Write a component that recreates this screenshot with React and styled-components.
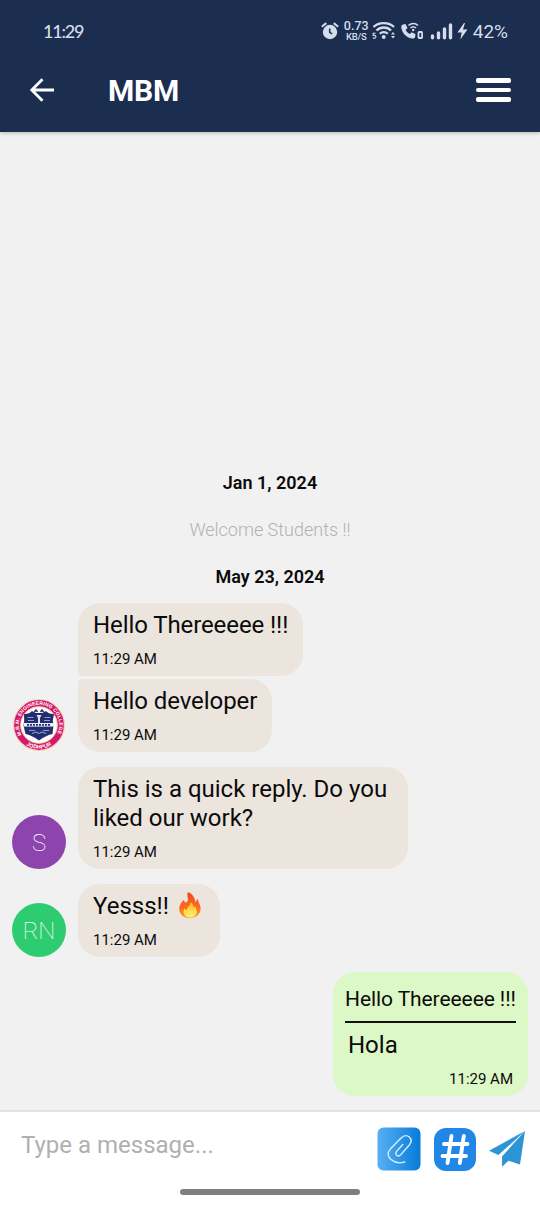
import React from "react";
import styled, { createGlobalStyle } from "styled-components";

const GlobalStyle = createGlobalStyle`
  * { box-sizing: border-box; }
  body { margin: 0; background: #f1f1f1; }
`;

const Screen = styled.div`
  width: 540px;
  height: 1206px;
  display: flex;
  flex-direction: column;
  background: #f1f1f1;
  color: #0b0b0b;
  font-family: Roboto, "Liberation Sans", sans-serif;
  overflow: hidden;
`;

const Top = styled.header`
  flex: none;
  height: 132px;
  background: #1b2e4f;
  box-shadow: 0 1px 4px rgba(0, 0, 0, 0.25);
`;

const StatusBar = styled.div`
  height: 62px;
  padding: 0 32px 0 43px;
  display: flex;
  align-items: center;
  justify-content: space-between;
  color: #d5dcec;
`;

const Clock = styled.span`
  font-family: Lato, sans-serif;
  font-size: 18px;
  font-weight: 500;
  letter-spacing: -1.2px;
`;

const StatusIcons = styled.div`
  display: flex;
  align-items: center;
`;

const Rate = styled.div`
  display: grid;
  grid-template-rows: 11px 9px;
  width: 25px;
  margin-left: 5px;
  font-family: Roboto, sans-serif;
  font-weight: 500;
  text-align: center;
  white-space: nowrap;
`;

const RateValue = styled.div`
  font-size: 12.5px;
  line-height: 10px;
`;

const RateUnit = styled.div`
  font-size: 9.5px;
  line-height: 10px;
  letter-spacing: -0.3px;
`;

const Radios = styled.svg`
  width: 98px;
  height: 24px;
  margin-left: 2px;
`;

const Battery = styled.span`
  margin-left: 4px;
  font-family: Roboto, sans-serif;
  font-size: 19px;
  letter-spacing: 0;
`;

const TitleBar = styled.div`
  height: 56px;
  padding: 0 29px 0 28px;
  display: flex;
  align-items: center;
`;

const Title = styled.h1`
  flex: 1;
  margin: 2px 0 0 52px;
  color: #fff;
  font-size: 30px;
  font-weight: 700;
  line-height: 36px;
  letter-spacing: -0.2px;
`;

const MenuLines = styled.div`
  display: grid;
  gap: 5px;
  width: 35px;
`;

const MenuLine = styled.i`
  height: 4.4px;
  border-radius: 2px;
  background: #fff;
`;

const Chat = styled.main`
  flex: 1;
  display: flex;
  flex-direction: column;
  justify-content: flex-end;
  padding: 0 12px 14px;
`;

const DateLabel = styled.div`
  height: 22px;
  margin-bottom: ${(p) => p.$gap}px;
  font-size: 18px;
  font-weight: 600;
  line-height: 22px;
  text-align: center;
`;

const SystemNote = styled.div`
  height: 22px;
  margin-bottom: 25px;
  color: #b2b2b2;
  font-size: 18px;
  font-weight: 300;
  line-height: 22px;
  text-align: center;
`;

const Row = styled.div`
  display: flex;
  align-items: flex-end;
  justify-content: ${(p) => (p.$own ? "flex-end" : "flex-start")};
  margin-bottom: ${(p) => p.$gap || 0}px;
`;

const AvatarSlot = styled.div`
  flex: none;
  width: 54px;
  height: 54px;
  margin-right: 12px;
`;

const Avatar = styled(AvatarSlot)`
  display: grid;
  place-items: center;
  padding-top: 2px;
  border-radius: 50%;
  background: ${(p) => p.$color};
  color: #fff;
  font-size: 24px;
  font-weight: 100;
`;

const Bubble = styled.div`
  width: ${(p) => p.$width}px;
  padding: 8px 0 8px 15px;
  border-radius: ${(p) => p.$corners || "22px"};
  background: #ece5de;
`;

const OwnBubble = styled.div`
  width: 195px;
  height: 124px;
  padding: 14px 12px 0;
  border-radius: 22px;
  background: #dcf8c6;
`;

const Message = styled.p`
  margin: 0;
  font-size: 24px;
  line-height: 29px;
  letter-spacing: ${(p) => p.$spacing || 0}px;
  white-space: pre;
`;

const Time = styled.time`
  display: block;
  margin-top: 10px;
  font-size: 15px;
  line-height: 18px;
`;

const Quote = styled.div`
  height: 37px;
  border-bottom: 2px solid #111;
  font-size: 21px;
  line-height: 27px;
  letter-spacing: -0.08px;
  white-space: nowrap;
`;

const OwnMessage = styled(Message)`
  margin: 8px 3px 0;
`;

const OwnTime = styled(Time)`
  margin: 10px 3px 0;
  text-align: right;
`;

const Flame = styled.svg`
  width: 24px;
  height: 28px;
  margin: -3px 0 -3px 3px;
  vertical-align: -2px;
`;

const Footer = styled.footer`
  flex: none;
  height: 96px;
  border-top: 2px solid #e2e2e2;
  background: #fff;
`;

const Composer = styled.div`
  height: 74px;
  display: flex;
  align-items: center;
  padding: 0 14px 0 21px;
`;

const Placeholder = styled.div`
  flex: 1;
  margin-bottom: 8px;
  color: #b0b0b0;
  font-size: 24px;
  line-height: 30px;
`;

const Actions = styled.div`
  display: grid;
  grid-template-columns: 45px 43px 38px;
  align-items: center;
  column-gap: 11.5px;
`;

const HomeBar = styled.div`
  width: 180px;
  height: 6px;
  margin: 3px auto 0;
  border-radius: 3px;
  background: #7f7f7f;
`;

const AlarmIcon = () => (
  <svg width="18" height="20" viewBox="0 0 18 20">
    <circle cx="9" cy="11" r="7.2" fill="currentColor" />
    <path d="M1.4 5.2 4.6 2.6M16.6 5.2l-3.2-2.6" stroke="currentColor" strokeWidth="2" strokeLinecap="round" />
    <path d="M8.7 7.4v4l2.5 1.5" fill="none" stroke="#1b2e4f" strokeWidth="1.5" />
  </svg>
);

const RadioIcons = () => (
  <Radios viewBox="0 0 98 24" fill="none" stroke="currentColor">
    <path d="M2.500 8c5-5.200 15.500-5.200 20.500 0M5.500 11.500c4-4 10.700-4 14.500 0M8.800 14.800c2.200-2.200 5.800-2.200 8 0" strokeWidth="2.300" />
    <circle cx="12.700" cy="18" r="2" fill="currentColor" stroke="none" />
    <path d="M4.700 14.300H2.200v2.200c2.600-.5 3 .8 2.500 1.900-.5.900-1.800 1-2.800.3" strokeWidth="1.100" />
    <path d="m20 15.500 2-2.500 2 2.500zM20 17l2 2.500 2-2.500z" fill="currentColor" stroke="none" />
    <path d="M32 5.500 34.500 5l2 4-1.800 1.800c.8 2 2.200 3.400 4.200 4.300l1.900-1.800 3.700 2-.4 2.700c-.3 1.300-1.700 1.800-3.300 1.500C35.500 18.500 31 14 30.300 8.500 30.200 7 30.700 5.800 32 5.500z" fill="currentColor" stroke="none" />
    <path d="M37.500 6.500c2.800-2.700 7-2.700 9.500 0M39.500 9c1.600-1.500 3.900-1.500 5.500 0" strokeWidth="1.500" />
    <circle cx="42.200" cy="11" r="1.200" fill="currentColor" stroke="none" />
    <rect x="47.500" y="13" width="3.600" height="6" rx=".7" strokeWidth="1.800" />
    <path d="M61.500 17v1.800M67.500 14v4.800M73.500 10v8.800M79.500 6v12.800" strokeWidth="3.400" strokeLinecap="round" />
    <path d="M93 4 86.500 13.500h4.200l-1.400 7 7.200-10h-4.500l2-6.500z" fill="currentColor" stroke="none" />
  </Radios>
);

const BackIcon = () => (
  <svg width="28" height="28" viewBox="0 0 28 28" fill="none" stroke="#fff" strokeWidth="2.8">
    <path d="M26 14H4M14.500 3.300 3.800 14l10.700 10.700" />
  </svg>
);

const Crest = () => (
  <svg width="54" height="54" viewBox="0 0 54 54">
    <defs>
      <path id="rim" d="M9.400 36.900a20.200 20.200 0 1 1 35.200 0" />
      <path id="rimLow" d="M9 42.600a23.800 23.800 0 0 0 36 0" />
    </defs>
    <circle cx="27" cy="27" r="25.500" fill="#fff" stroke="#e9c47e" strokeWidth=".7" />
    <circle cx="27" cy="27" r="21.700" fill="none" stroke="#d4186b" strokeWidth="6.400" />
    <circle cx="27" cy="27" r="18.300" fill="#fff" stroke="#e8bd76" strokeWidth=".8" />
    <g fill="#fff" fontFamily="Liberation Sans" fontWeight="700" fontSize="5">
      <text><textPath href="#rim" textLength="82" lengthAdjust="spacing">M.B.M. ENGINEERING COLLEGE</textPath></text>
      <text fontSize="5.500"><textPath href="#rimLow" startOffset="50%" textAnchor="middle">JODHPUR</textPath></text>
    </g>
    <path d="M12 16c3.500.3 6-1 8-3l3 2h8l3-2c2 2 4.500 3.300 8 3l-1.200 6.500.7 5-1 8.500c-4 .5-8.500 3-13.500 6.500-5-3.500-9.500-6-13.500-6.500L11.500 27.500l.7-5z" fill="#242c70" />
    <path d="M24.500 17h5l-1.500 3v6h-2v-6z" fill="#dce2f2" />
    <path d="M15.500 19.500h6M32.500 19.500h6M16 22.500h6M32 22.500h6M17 32.500h6M31 32.500h6M20 35.500l4-1.500 3 1.500 3-1.500 4 1.500" fill="none" stroke="#8ca0ce" strokeWidth="1.100" />
    <path d="M12 25h30v3.600H12z" fill="#e9edf7" />
    <path d="M15 26.900h24" stroke="#242c70" strokeWidth="1.600" strokeDasharray="2 1" />
    <path d="m22 14.500 2-2.500 1.500 2M28.500 14l1.500-2 2 2.500" fill="none" stroke="#242c70" strokeWidth="1.500" />
  </svg>
);

const FlameIcon = () => (
  <Flame viewBox="0 0 24 28" role="img" aria-label="fire">
    <defs>
      <linearGradient id="fire" x1="0" y1="0" x2="0" y2="1">
        <stop stopColor="#f44322" />
        <stop offset=".55" stopColor="#fb6a20" />
        <stop offset="1" stopColor="#ff9b21" />
      </linearGradient>
      <linearGradient id="core" x1="0" y1="0" x2="0" y2="1">
        <stop stopColor="#ffbd20" />
        <stop offset="1" stopColor="#fff176" />
      </linearGradient>
    </defs>
    <path d="M10 1c-2 4 1.500 7-1 10-1 1.200-2.800.2-3.200-2C2 12.500.8 16 1.300 19c.6 5 4.800 8 10.300 8 6.400 0 10.900-3.800 11-9.200.1-4-2.500-6.200-2.600-9.800-1.500 1-2 2.500-2 4C16.500 7 15.500 3.500 10 1z" fill="url(#fire)" />
    <path d="M12.500 11c.7 3.500-3.400 4.500-3.700 8-1 0-1.800-.7-2-1.800-1.200 1.600-1.600 3.200-1 5 .8 2.900 3.500 4.300 6.300 4.300 4 0 6.700-2.300 6.700-5.900 0-2.300-1.200-3.600-1.300-5.600-.9.700-1.300 1.500-1.500 2.500-.2-2.700-1.300-5-3.500-6.500z" fill="url(#core)" />
  </Flame>
);

const ClipIcon = () => (
  <svg width="44" height="44" viewBox="0 0 44 44">
    <defs>
      <linearGradient id="clip">
        <stop stopColor="#58b0f5" />
        <stop offset="1" stopColor="#087bd8" />
      </linearGradient>
    </defs>
    <rect x=".5" y=".5" width="43" height="43" rx="6" fill="url(#clip)" />
    <path d="M27.500 35c-4.500 1.800-10 .8-13.500-2-4-3.200-4.200-7.200-1-10.700L23.500 11.500c3-3 6.300-3.200 8.500-1.200 2.400 2.200 2.300 5.200-.2 8.200l-8.300 9.300c-1.300 1.400-2.900 1.600-4.100.6-1.300-1.100-1.200-2.600.1-4.100l6-6.600" transform="translate(.3 -.2)" fill="none" stroke="#d9f1ff" strokeWidth="1.400" strokeLinecap="round" />
  </svg>
);

const HashIcon = () => (
  <svg width="42" height="43" viewBox="0 0 42 43">
    <rect width="42" height="43" rx="12" fill="#2186e5" />
    <path d="m17.500 8-4 27M29.800 8l-4 27M10 16h23.500M8.500 28H32" stroke="#fff" strokeWidth="3.900" strokeLinecap="round" />
  </svg>
);

const SendIcon = () => (
  <svg width="38" height="38" viewBox="0 0 38 38">
    <path d="M37 1 1 20.800l9.400 4.300z" fill="#2d95d5" />
    <path d="M37 1 14 26.500v10.300l6.500-6 11.500 3.600z" fill="#2d95d5" />
  </svg>
);

export default function App() {
  return (
    <>
      <GlobalStyle />
      <Screen>
        <Top>
          <StatusBar>
            <Clock>11:29</Clock>
            <StatusIcons>
              <AlarmIcon />
              <Rate>
                <RateValue>0.73</RateValue>
                <RateUnit>KB/S</RateUnit>
              </Rate>
              <RadioIcons />
              <Battery>42%</Battery>
            </StatusIcons>
          </StatusBar>
          <TitleBar>
            <BackIcon />
            <Title>MBM</Title>
            <MenuLines>
              <MenuLine />
              <MenuLine />
              <MenuLine />
            </MenuLines>
          </TitleBar>
        </Top>
        <Chat>
          <DateLabel $gap={25}>Jan 1, 2024</DateLabel>
          <SystemNote>Welcome Students !!</SystemNote>
          <DateLabel $gap={15}>May 23, 2024</DateLabel>
          <Row $gap={3}>
            <AvatarSlot />
            <Bubble $width={225} $corners="22px 22px 22px 4px">
              <Message $spacing={-0.09}>Hello Thereeeee !!!</Message>
              <Time>11:29 AM</Time>
            </Bubble>
          </Row>
          <Row $gap={15}>
            <AvatarSlot>
              <Crest />
            </AvatarSlot>
            <Bubble $width={194} $corners="4px 22px 22px 22px">
              <Message $spacing={-0.07}>Hello developer</Message>
              <Time>11:29 AM</Time>
            </Bubble>
          </Row>
          <Row $gap={15}>
            <Avatar $color="#8e44ad">S</Avatar>
            <Bubble $width={330}>
              <Message>{"This is a quick reply. Do you\nliked our work?"}</Message>
              <Time>11:29 AM</Time>
            </Bubble>
          </Row>
          <Row $gap={15}>
            <Avatar $color="#2ecc71">RN</Avatar>
            <Bubble $width={142}>
              <Message>
                Yesss!! <FlameIcon />
              </Message>
              <Time>11:29 AM</Time>
            </Bubble>
          </Row>
          <Row $own>
            <OwnBubble>
              <Quote>Hello Thereeeee !!!</Quote>
              <OwnMessage>Hola</OwnMessage>
              <OwnTime>11:29 AM</OwnTime>
            </OwnBubble>
          </Row>
        </Chat>
        <Footer>
          <Composer>
            <Placeholder>Type a message...</Placeholder>
            <Actions>
              <ClipIcon />
              <HashIcon />
              <SendIcon />
            </Actions>
          </Composer>
          <HomeBar />
        </Footer>
      </Screen>
    </>
  );
}
